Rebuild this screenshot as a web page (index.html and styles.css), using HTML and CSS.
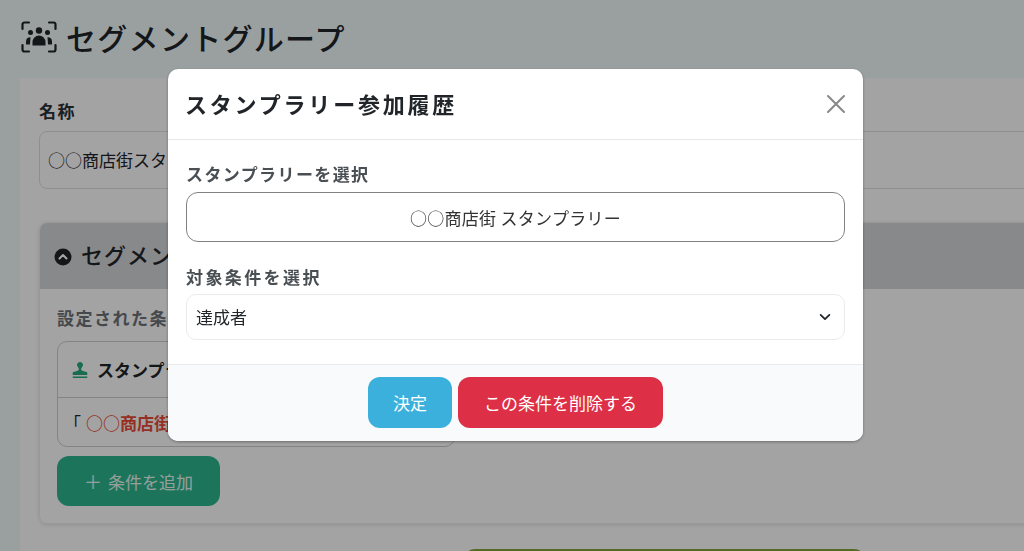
FILE: index.html
```html
<!DOCTYPE html>
<html lang="ja">
<head>
<meta charset="utf-8">
<title>セグメントグループ</title>
<link rel="stylesheet" href="styles.css">
</head>
<body>
<main class="page">
  <h1 class="page-title">
    <svg class="title-icon" viewBox="0 0 36 32" aria-hidden="true">
      <path d="M8 1.500H3.500a2 2 0 0 0-2 2V8M28 1.500h4.500a2 2 0 0 1 2 2V8M1.500 24v4.500a2 2 0 0 0 2 2H8M34.500 24v4.500a2 2 0 0 1-2 2H28" fill="none" stroke="currentColor" stroke-width="2.200" stroke-linecap="round"/>
      <circle cx="18" cy="9.500" r="3.200" fill="currentColor"/>
      <circle cx="9.500" cy="11.500" r="2.500" fill="currentColor"/>
      <circle cx="26.500" cy="11.500" r="2.500" fill="currentColor"/>
      <path d="M11.500 24.500v-3.500a6.500 6.500 0 0 1 13 0v3.500z" fill="currentColor"/>
      <path d="M5 23.500v-3a4.500 4.500 0 0 1 4.500-4.200l-.5 7.200zM31 23.500v-3a4.500 4.500 0 0 0-4.500-4.200l.5 7.200z" fill="currentColor"/>
    </svg>
    <span>セグメントグループ</span>
  </h1>
  <section class="card">
    <div class="field-label">名称</div>
    <div class="name-input">○○商店街スタンプラリー達成者</div>
    <section class="panel">
      <header class="panel-head">
        <svg class="panel-toggle" viewBox="0 0 18 18" aria-hidden="true">
          <circle cx="9" cy="9" r="8.500" fill="currentColor"/>
          <path d="M5.500 10.500 9 7l3.500 3.500" fill="none" stroke="#fff" stroke-width="2" stroke-linecap="round" stroke-linejoin="round"/>
        </svg>
        <span>セグメント条件</span>
      </header>
      <div class="panel-body">
        <div class="conditions-label">設定された条件</div>
        <div class="condition">
          <div class="condition-head">
            <svg class="stamp-icon" viewBox="0 0 18 18" aria-hidden="true">
              <path d="M9 1a3 3 0 0 0-1.800 5.400c.4.400.6.800.6 1.600 0 .7-.3 1.400-1 1.700L2.500 11a1 1 0 0 0-.8 1v2h14.600v-2a1 1 0 0 0-.8-1l-4.300-1.300c-.7-.3-1-1-1-1.700 0-.8.2-1.200.6-1.600A3 3 0 0 0 9 1z" fill="currentColor"/>
              <rect x="1.700" y="15.500" width="14.600" height="1.500" fill="currentColor"/>
            </svg>
            <span>スタンプラリー参加履歴</span>
          </div>
          <div class="condition-text">「<strong>○○商店街 スタンプラリー</strong>」の達成者</div>
        </div>
        <button class="add-btn" type="button"><span class="plus">＋</span>条件を追加</button>
      </div>
    </section>
    <div class="actions"><button class="save-btn" type="button">保存する</button></div>
  </section>
</main>

<div class="overlay">
  <div class="modal">
    <header class="modal-head">
      <h2 class="modal-title">スタンプラリー参加履歴</h2>
      <svg class="close-icon" viewBox="0 0 20 20" aria-hidden="true">
        <path d="M2 2l16 16M18 2 2 18" fill="none" stroke="currentColor" stroke-width="2" stroke-linecap="round"/>
      </svg>
    </header>
    <div class="modal-body">
      <div class="modal-label">スタンプラリーを選択</div>
      <div class="stamp-select">○○商店街 スタンプラリー</div>
      <div class="modal-label second">対象条件を選択</div>
      <div class="target-select">
        <span>達成者</span>
        <svg class="chevron" viewBox="0 0 16 16" aria-hidden="true">
          <path d="M3 5.500 8 10.500l5-5" fill="none" stroke="currentColor" stroke-width="2" stroke-linecap="round" stroke-linejoin="round"/>
        </svg>
      </div>
    </div>
    <footer class="modal-foot">
      <button class="btn btn-ok" type="button">決定</button>
      <button class="btn btn-del" type="button">この条件を削除する</button>
    </footer>
  </div>
</div>
</body>
</html>
```
FILE: styles.css
```css
* { box-sizing: border-box; }
html, body { margin: 0; height: 551px; overflow: hidden; }
body {
  background: #edf6f6;
  color: #1f2429;
  font-family: "Noto Sans CJK JP", "Noto Sans", sans-serif;
}
.page { width: 1024px; padding-top: 17px; overflow: hidden; height: 551px; }
.page-title {
  display: flex;
  align-items: center;
  gap: 9px;
  margin: 0 0 0 21px;
  height: 40px;
  font-size: 30px;
  font-weight: 500;
  letter-spacing: 1.300px;
  line-height: 40px;
}
.title-icon { width: 36px; height: 32px; flex: none; }
.card {
  width: 1300px;
  margin: 21px 0 0 20px;
  padding: 23px 19px 40px;
  height: 560px;
  background: #fbfbfb;
}
.field-label { font-size: 17px; font-weight: 700; line-height: 20px; letter-spacing: 1.500px; color: #2b3035; }
.name-input {
  margin-top: 10px;
  height: 58px;
  padding: 0 8px;
  display: flex;
  align-items: center;
  font-size: 17px;
  line-height: 24px;
  background: #fbfbfb;
  border: 1px solid #dcdcdc;
  border-radius: 8px;
}
.panel {
  margin-top: 33px;
  height: 302px;
  border-radius: 8px;
  border: 1px solid #ececec;
  box-shadow: 0 1px 4px rgba(0,0,0,.12);
  overflow: hidden;
}
.panel-head {
  display: flex;
  align-items: center;
  gap: 9px;
  height: 66px;
  padding: 0 0 4px 14px;
  background: #d2d3d6;
  font-size: 22px;
  font-weight: 500;
  letter-spacing: 1px;
}
.panel-toggle { width: 18px; height: 18px; flex: none; margin-top: 5px; }
.panel-body { padding: 17px 17px; }
.conditions-label { font-size: 17px; font-weight: 700; line-height: 24px; letter-spacing: 1.500px; color: #6b7075; }
.condition {
  margin-top: 11px;
  width: 398px;
  height: 106px;
  border: 1px solid #c9c9c9;
  border-radius: 10px;
}
.condition-head {
  display: flex;
  align-items: center;
  gap: 8px;
  height: 56px;
  padding-left: 13px;
  border-bottom: 1px solid #c9c9c9;
  font-size: 17px;
  font-weight: 700;
}
.stamp-icon { width: 18px; height: 18px; color: #25a87c; flex: none; }
.condition-text { padding: 0 6px; line-height: 50px; font-size: 17px; white-space: nowrap; }
.condition-text strong { color: #e64a35; margin-left: 5px; }
.add-btn {
  display: flex;
  align-items: center;
  justify-content: center;
  gap: 6px;
  margin-top: 9px;
  width: 163px;
  height: 50px;
  border: 0;
  border-radius: 12px;
  background: #2bb48c;
  color: #e6f5ef;
  font: 400 17px "Noto Sans CJK JP", sans-serif;
}
.plus { font-size: 18px; }
.actions { margin: 25px 0 0 424px; }
.save-btn {
  display: block;
  width: 403px;
  height: 50px;
  border: 0;
  border-radius: 12px;
  background: #7da33a;
  color: #fff;
  font: 400 17px "Noto Sans CJK JP", sans-serif;
}

.overlay {
  position: fixed;
  inset: 0;
  background: rgba(0,0,0,.35);
  padding: 69px 0 0 168px;
}
.modal {
  width: 695px;
  height: 372px;
  display: flex;
  flex-direction: column;
  background: #fff;
  border-radius: 10px;
  overflow: hidden;
  box-shadow: 0 1px 3px rgba(0,0,0,.35);
}
.modal-head {
  display: flex;
  align-items: center;
  justify-content: space-between;
  height: 71px;
  flex: none;
  padding: 0 17px 0 18px;
  border-bottom: 1px solid #e8e8e8;
}
.modal-title { margin: 0 0 2px -1px; font-size: 22px; font-weight: 700; letter-spacing: 2.800px; line-height: 30px; color: #212529; }
.close-icon { width: 20px; height: 20px; color: #888; }
.modal-body { flex: 1; padding: 23px 18px 0; }
.modal-label { font-size: 17px; font-weight: 700; line-height: 22px; letter-spacing: 1.400px; color: #4a4f54; }
.modal-label.second { margin-top: 24px; letter-spacing: 2.400px; }
.stamp-select {
  margin-top: 7px;
  height: 50px;
  display: flex;
  align-items: center;
  justify-content: center;
  border: 1px solid #7f8284;
  border-radius: 12px;
  font-size: 17px;
  letter-spacing: .3px;
  color: #333;
}
.target-select {
  margin-top: 6px;
  height: 46px;
  display: flex;
  align-items: center;
  justify-content: space-between;
  padding: 0 12px 2px 9px;
  border: 1px solid #e9ebee;
  border-radius: 10px;
  font-size: 17px;
  color: #212529;
}
.chevron { width: 14px; height: 14px; margin-top: 2px; }
.modal-foot {
  display: flex;
  justify-content: center;
  gap: 6px;
  height: 77px;
  flex: none;
  padding-top: 12px;
  background: #f9fafc;
  border-top: 1px solid #e8eaee;
}
.btn {
  height: 51px;
  border: 0;
  border-radius: 12px;
  color: #fff;
  font: 400 17px "Noto Sans CJK JP", sans-serif;
}
.btn-ok { width: 84px; background: #3bb0dc; }
.btn-del { width: 205px; background: #dd3046; }
```
